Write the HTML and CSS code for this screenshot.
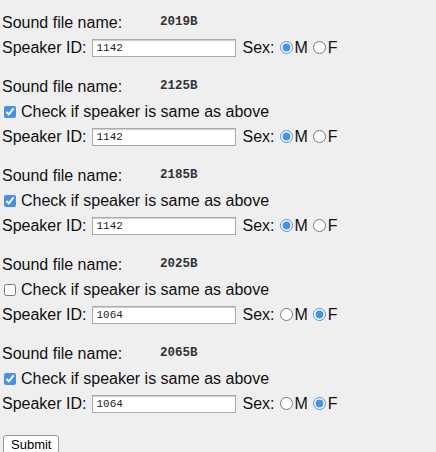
FILE: index.html
```html
<!DOCTYPE html>
<html>
<head>
    <title>Speaker Labels</title>
    <link rel="stylesheet" href="styles.css">
</head>
<body>
    <form id="speakerForm" class="speaker-form">
        <div class="entry">
            <div class="row"><span class="label">Sound file name:</span><span class="filename">2019B</span></div>
            <div class="row">
                Speaker ID: <input type="text" class="speaker-id" value="1142">
                <span class="sex">Sex: <input type="radio" name="sex1" checked>M<input type="radio" name="sex1">F</span>
            </div>
        </div>
        <div class="entry">
            <div class="row"><span class="label">Sound file name:</span><span class="filename">2125B</span></div>
            <div class="row"><input type="checkbox" class="same" checked>Check if speaker is same as above</div>
            <div class="row">
                Speaker ID: <input type="text" class="speaker-id" value="1142">
                <span class="sex">Sex: <input type="radio" name="sex2" checked>M<input type="radio" name="sex2">F</span>
            </div>
        </div>
        <div class="entry">
            <div class="row"><span class="label">Sound file name:</span><span class="filename">2185B</span></div>
            <div class="row"><input type="checkbox" class="same" checked>Check if speaker is same as above</div>
            <div class="row">
                Speaker ID: <input type="text" class="speaker-id" value="1142">
                <span class="sex">Sex: <input type="radio" name="sex3" checked>M<input type="radio" name="sex3">F</span>
            </div>
        </div>
        <div class="entry">
            <div class="row"><span class="label">Sound file name:</span><span class="filename">2025B</span></div>
            <div class="row"><input type="checkbox" class="same">Check if speaker is same as above</div>
            <div class="row">
                Speaker ID: <input type="text" class="speaker-id" value="1064">
                <span class="sex">Sex: <input type="radio" name="sex4">M<input type="radio" name="sex4" checked>F</span>
            </div>
        </div>
        <div class="entry">
            <div class="row"><span class="label">Sound file name:</span><span class="filename">2065B</span></div>
            <div class="row"><input type="checkbox" class="same" checked>Check if speaker is same as above</div>
            <div class="row">
                Speaker ID: <input type="text" class="speaker-id" value="1064">
                <span class="sex">Sex: <input type="radio" name="sex5">M<input type="radio" name="sex5" checked>F</span>
            </div>
        </div>
        <button type="submit" class="submit-btn">Submit</button>
    </form>
</body>
</html>
```

FILE: styles.css
```css
body { margin: 0; padding: 10px 2px; background-color: #efefef; color: #111;
       font-family: "Liberation Sans", Arial, sans-serif; font-size: 16px; }
.entry { margin-bottom: 14px; }
.row { height: 25px; line-height: 25px; display: flex; align-items: center; white-space: nowrap; }
.label { display: inline-block; width: 158px; }
.filename { font-family: "Liberation Mono", "Courier New", monospace; font-size: 12.5px; font-weight: bold; color: #333; }
.speaker-id { width: 136px; height: 16px; margin: 0 6px 0 6px; padding: 0 3px; border: 1px solid #aaa;
              box-shadow: inset 0 1px 1px #ccc; background: white;
              font-family: "Liberation Mono", monospace; font-size: 11px; color: #222; }
.sex { display: flex; align-items: center; }
.sex input { margin: 0 2px 0 5px; width: 13px; height: 13px; accent-color: #4a90e2; }
.same { margin: 0 5px 0 2px; width: 12px; height: 12px; accent-color: #4a90e2; }
.submit-btn { margin: 5px 0 0 1px; padding: 1px 7px; font-family: "Liberation Sans", Arial, sans-serif; font-size: 13px;
              background: white; border: 1px solid #999; border-radius: 3px; }
```
